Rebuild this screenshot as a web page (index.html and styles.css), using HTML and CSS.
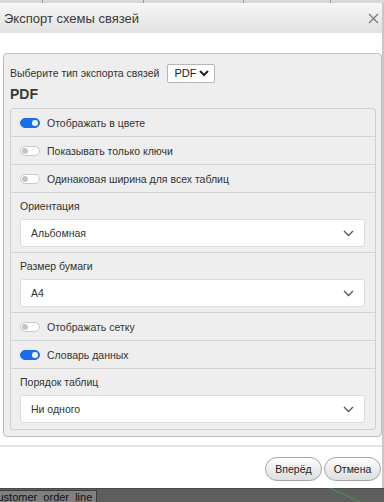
FILE: index.html
```html
<!DOCTYPE html>
<html lang="ru">
<head>
  <meta charset="UTF-8"/>
  <title>Экспорт схемы связей</title>
  <link rel="stylesheet" href="styles.css">
</head>
<body>
  <div class="app-top">
    <span class="cell c1"></span>
    <span class="cell c2"></span>
    <span class="cell c3"></span>
    <span class="cell c4"></span>
    <span class="cell c5"></span>
  </div>

  <div class="dialog">
    <div class="dialog-head">
      <span class="dialog-title">Экспорт схемы связей</span>
      <button class="close-btn">
        <svg width="11" height="11" viewBox="0 0 11 11"><path d="M1 1 L10 10 M10 1 L1 10" stroke="#777" stroke-width="1.2" fill="none"/></svg>
      </button>
    </div>

    <div class="dialog-body">
      <div class="panel">
        <div class="type-row">
          <span>Выберите тип экспорта связей</span>
          <div class="mini-select">
            <span>PDF</span>
            <svg width="10" height="7" viewBox="0 0 10 7"><path d="M1 1 L5 5 L9 1" stroke="#222" stroke-width="2" fill="none"/></svg>
          </div>
        </div>
        <div class="panel-title">PDF</div>

        <div class="fieldset">
          <!-- toggles -->
          <div class="row toggle-row">
            <span class="toggle on"></span>
            <span>Отображать в цвете</span>
          </div>
          <div class="row toggle-row">
            <span class="toggle"></span>
            <span>Показывать только ключи</span>
          </div>
          <div class="row toggle-row">
            <span class="toggle"></span>
            <span>Одинаковая ширина для всех таблиц</span>
          </div>

          <!-- selects -->
          <div class="row field-row">
            <div class="field-label">Ориентация</div>
            <div class="select">
              <span>Альбомная</span>
              <svg width="11" height="7" viewBox="0 0 11 7"><path d="M1 1 L5.5 5.5 L10 1" stroke="#555" stroke-width="1.3" fill="none"/></svg>
            </div>
          </div>
          <div class="row field-row">
            <div class="field-label">Размер бумаги</div>
            <div class="select">
              <span>A4</span>
              <svg width="11" height="7" viewBox="0 0 11 7"><path d="M1 1 L5.5 5.5 L10 1" stroke="#555" stroke-width="1.3" fill="none"/></svg>
            </div>
          </div>

          <div class="row toggle-row">
            <span class="toggle"></span>
            <span>Отображать сетку</span>
          </div>
          <div class="row toggle-row">
            <span class="toggle on"></span>
            <span>Словарь данных</span>
          </div>

          <div class="row field-row">
            <div class="field-label">Порядок таблиц</div>
            <div class="select">
              <span>Ни одного</span>
              <svg width="11" height="7" viewBox="0 0 11 7"><path d="M1 1 L5.5 5.5 L10 1" stroke="#555" stroke-width="1.3" fill="none"/></svg>
            </div>
          </div>
        </div>
      </div>
    </div>

    <div class="dialog-foot">
      <button class="btn">Вперёд</button>
      <button class="btn">Отмена</button>
    </div>
  </div>

  <div class="app-bottom">
    <div class="tab">customer_order_line</div>
    <svg class="link-line" width="40" height="14" viewBox="0 0 40 14"><path d="M0 0 L30 14" stroke="#3f9a3f" stroke-width="1" fill="none"/></svg>
  </div>
</body>
</html>
```

FILE: styles.css
```css
:root {
  --text: #333333;
  --panel: #eeeeee;
  --line: #d4d4d4;
  --blue: #1a6fe8;
}

*, *::before, *::after {
  margin: 0;
  padding: 0;
  box-sizing: border-box;
}

body {
  width: 384px;
  height: 502px;
  overflow: hidden;
  font-family: "Liberation Sans", Arial, sans-serif;
  font-size: 10.5px;
  color: var(--text);
  background: #5e5e5e;
}

/*—— APP BEHIND ——*/
.app-top {
  display: flex;
  height: 3px;
  background: #9a9a9a;
  gap: 1px;
}
.cell { background: #d8d8d8; height: 3px; }
.c1 { width: 42px; }
.c2 { width: 100px; }
.c3 { width: 99px; }
.c4 { width: 86px; }
.c5 { flex: 1; }

/*—— DIALOG ——*/
.dialog {
  height: 485px;
  background: #fff;
  border-right: 2px solid #c8c8c8;
  display: flex;
  flex-direction: column;
}
.dialog-head {
  height: 30px;
  display: flex;
  align-items: center;
  justify-content: space-between;
  padding: 0 2px 0 4px;
  background: linear-gradient(#f7f7f7, #e1e1e1);
}
.dialog-title {
  font-size: 13px;
  color: #3a3a3a;
}
.close-btn {
  background: none;
  border: none;
  width: 14px;
  height: 14px;
  display: flex;
  align-items: center;
  justify-content: center;
}

.dialog-body {
  padding: 20px 0 0 3px;
}
.panel {
  background: var(--panel);
  border: 1px solid #bdbdbd;
  border-radius: 4px;
  padding: 10px 5px 6px 6px;
}
.type-row {
  display: flex;
  align-items: center;
  gap: 8px;
  height: 18px;
}
.mini-select {
  width: 48px;
  height: 19px;
  background: #fff;
  border: 1px solid #b5b5b5;
  border-radius: 2px;
  display: flex;
  align-items: center;
  justify-content: space-between;
  padding: 0 5px 0 6px;
  font-size: 11px;
  color: #222;
}
.panel-title {
  font-size: 14px;
  font-weight: bold;
  color: #3a3a3a;
  margin: 4px 0 6px;
  line-height: 16px;
}

.fieldset {
  border: 1px solid #cfcfcf;
  border-radius: 3px;
}
.row {
  border-bottom: 1px solid var(--line);
  padding: 0 10px 0 9px;
}
.row:last-child { border-bottom: none; }
.toggle-row {
  height: 28px;
  display: flex;
  align-items: center;
  gap: 7px;
}
.toggle {
  width: 20px;
  height: 10px;
  border-radius: 5px;
  background: #fff;
  border: 1px solid #c9c9c9;
  display: flex;
  align-items: center;
  padding: 0 1px;
}
.toggle::after {
  content: '';
  width: 6px;
  height: 6px;
  border-radius: 50%;
  background: #c4c4c4;
}
.toggle.on {
  background: var(--blue);
  border-color: var(--blue);
  justify-content: flex-end;
}
.toggle.on::after { background: #fff; }

.field-row {
  height: 60px;
  padding-top: 5px;
}
.field-label {
  line-height: 16px;
  margin-bottom: 5px;
}
.select {
  height: 28px;
  background: #fff;
  border: 1px solid #dcdcdc;
  border-radius: 3px;
  display: flex;
  align-items: center;
  justify-content: space-between;
  padding: 0 10px 0 10px;
}

/*—— FOOTER ——*/
.dialog-foot {
  margin-top: 8px;
  border-top: 2px solid #e4e4e4;
  display: flex;
  justify-content: flex-end;
  gap: 2px;
  padding: 10px 1px 0 0;
}
.btn {
  font-family: inherit;
  font-size: 10.5px;
  color: #222;
  height: 24px;
  width: 57px;
  border: 1px solid #a5a5a5;
  border-radius: 12px;
  background: linear-gradient(#fdfdfd, #dedede);
}

/*—— APP BEHIND (BOTTOM) ——*/
.app-bottom {
  height: 14px;
  display: flex;
  align-items: flex-end;
  border-top: 1px solid #4a4a4a;
}
.tab {
  margin-left: -11px;
  width: 108px;
  height: 12px;
  border: 1px solid #3d3d3d;
  border-bottom: none;
  background: #808080;
  font-size: 11px;
  line-height: 12px;
  padding-left: 2px;
  color: #111;
  overflow: hidden;
}
.link-line {
  margin-left: auto;
  margin-right: 14px;
}
```
